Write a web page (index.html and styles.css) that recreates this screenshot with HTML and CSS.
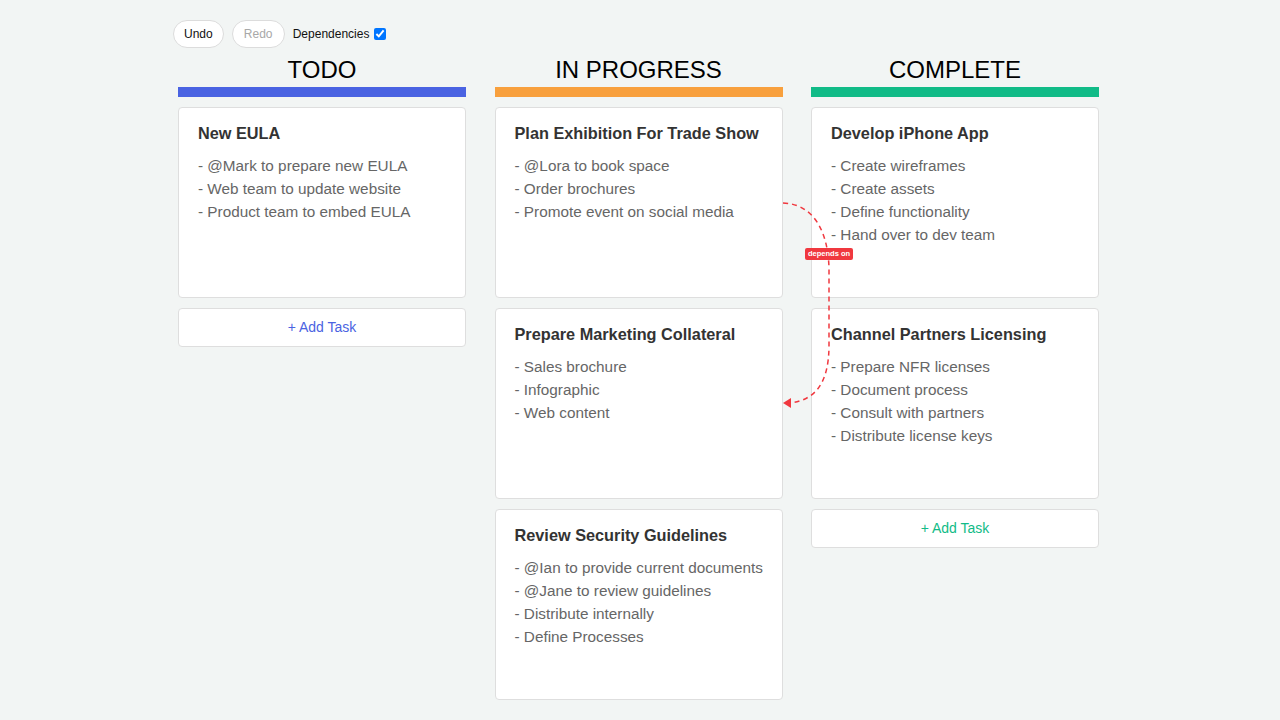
FILE: index.html
```html
<!DOCTYPE html>
<html lang="en">
<head>
    <meta charset="UTF-8">
    <meta name="viewport" content="width=device-width, initial-scale=1.0">
    <title>Kanban Board</title>
    <link rel="stylesheet" href="styles.css">
</head>
<body>

<div id="wrap">
    <div class="toolbar">
        <button class="btn">Undo</button>
        <button class="btn" disabled>Redo</button>
        <label class="dep">Dependencies <input type="checkbox" checked></label>
    </div>

    <div class="board">
        <div class="column todo">
            <h2>TODO</h2>
            <div class="bar"></div>
            <div class="card">
                <h3>New EULA</h3>
                <ul>
                    <li>- @Mark to prepare new EULA</li>
                    <li>- Web team to update website</li>
                    <li>- Product team to embed EULA</li>
                </ul>
            </div>
            <div class="add">+ Add Task</div>
        </div>

        <div class="column progress">
            <h2>IN PROGRESS</h2>
            <div class="bar"></div>
            <div class="card">
                <h3>Plan Exhibition For Trade Show</h3>
                <ul>
                    <li>- @Lora to book space</li>
                    <li>- Order brochures</li>
                    <li>- Promote event on social media</li>
                </ul>
            </div>
            <div class="card">
                <h3>Prepare Marketing Collateral</h3>
                <ul>
                    <li>- Sales brochure</li>
                    <li>- Infographic</li>
                    <li>- Web content</li>
                </ul>
            </div>
            <div class="card">
                <h3>Review Security Guidelines</h3>
                <ul>
                    <li>- @Ian to provide current documents</li>
                    <li>- @Jane to review guidelines</li>
                    <li>- Distribute internally</li>
                    <li>- Define Processes</li>
                </ul>
            </div>
        </div>

        <div class="column complete">
            <h2>COMPLETE</h2>
            <div class="bar"></div>
            <div class="card">
                <h3>Develop iPhone App</h3>
                <ul>
                    <li>- Create wireframes</li>
                    <li>- Create assets</li>
                    <li>- Define functionality</li>
                    <li>- Hand over to dev team</li>
                </ul>
            </div>
            <div class="card">
                <h3>Channel Partners Licensing</h3>
                <ul>
                    <li>- Prepare NFR licenses</li>
                    <li>- Document process</li>
                    <li>- Consult with partners</li>
                    <li>- Distribute license keys</li>
                </ul>
            </div>
            <div class="add">+ Add Task</div>
        </div>
    </div>

    <!-- dependency link between cards -->
    <svg class="links" width="934" height="720" viewBox="0 0 934 720">
        <path d="M610,203 C641,204 655,232 656,268 L656,345 C656,385 641,400 617,403"
              fill="none" stroke="#f0383f" stroke-width="1.5" stroke-dasharray="5,4"/>
        <path d="M610,403 L618,398 L618,408 Z" fill="#f0383f"/>
    </svg>
    <span class="badge">depends on</span>
</div>

</body>
</html>
```

FILE: styles.css
```css
body{
    margin: 0;
    background: #f2f5f4;
    font-family: "Liberation Sans", Arial, sans-serif;
}
#wrap{
    position: relative;
    width: 934px;
    margin: 0 auto;
    padding-top: 20px;
}
.toolbar{
    display: flex;
    align-items: center;
    gap: 8px;
    height: 28px;
}
.btn{
    height: 28px;
    padding: 0 10px;
    border: 1px solid #dcdcdc;
    border-radius: 14px;
    background: #fff;
    font-family: inherit;
    font-size: 12px;
    color: #111;
}
.btn:disabled{
    width: 53px;
    color: #a8a8a8;
}
.dep{
    display: flex;
    align-items: center;
    font-size: 12px;
    color: #111;
}
.dep input{
    margin: 0 0 0 5px;
    width: 12px;
    height: 12px;
}
.board{
    display: flex;
    gap: 28.5px;
    padding: 0 5px;
    margin-top: 7px;
}
.column{
    width: 288px;
    display: flex;
    flex-direction: column;
    gap: 10px;
}
h2{
    margin: 1px 0 0 0;
    height: 28px;
    line-height: 28px;
    font-size: 24px;
    font-weight: 400;
    text-align: center;
    color: #000;
}
.bar{
    height: 10px;
    margin-top: -7px;
}
.todo .bar{ background: #4a63e2; }
.progress .bar{ background: #f8a03d; }
.complete .bar{ background: #11bb87; }
.card{
    height: 191px;
    box-sizing: border-box;
    padding: 15px 18px 15px 19px;
    background: #fff;
    border: 1px solid #dedede;
    border-radius: 4px;
}
h3{
    margin: 0 0 11px 0;
    font-size: 16.3px;
    line-height: 20px;
    white-space: nowrap;
    color: #333;
}
ul{
    list-style: none;
    margin: 0;
    padding: 0;
}
li{
    font-size: 15.3px;
    line-height: 23px;
    color: #666;
}
.add{
    height: 39px;
    box-sizing: border-box;
    line-height: 37px;
    text-align: center;
    font-size: 14px;
    background: #fff;
    border: 1px solid #dedede;
    border-radius: 4px;
}
.todo .add{ color: #4a63e2; }
.complete .add{ color: #11bb87; }
.links{
    position: absolute;
    top: 0;
    left: 0;
    pointer-events: none;
}
.badge{
    position: absolute;
    left: 632px;
    top: 248px;
    padding: 0 3px;
    height: 12px;
    line-height: 12px;
    font-size: 7.5px;
    font-weight: bold;
    color: #fff;
    background: #f0383f;
    border-radius: 2px;
}
```
